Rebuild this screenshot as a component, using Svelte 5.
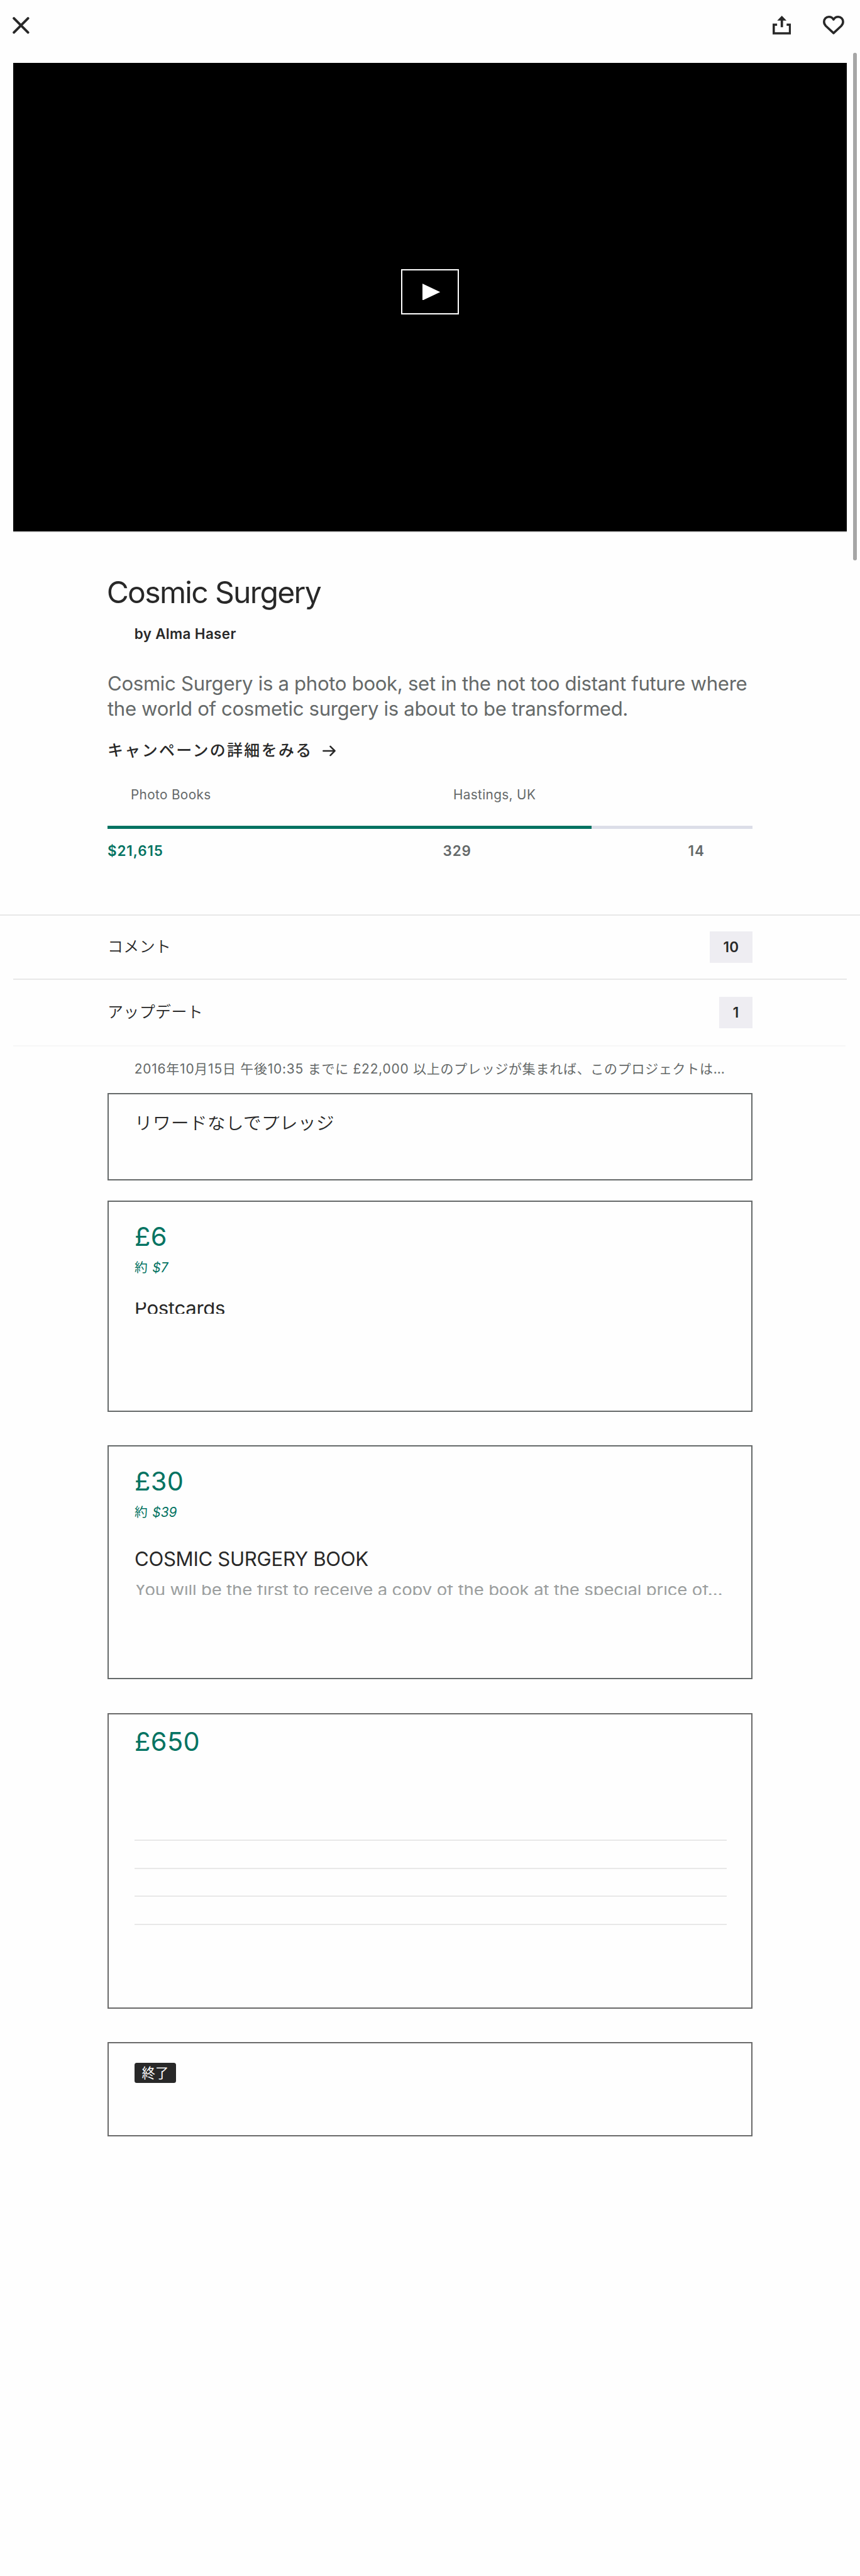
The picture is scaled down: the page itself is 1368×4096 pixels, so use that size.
<script>
  const project = {
    title: 'Cosmic Surgery',
    author: 'by Alma Haser',
    category: 'Photo Books',
    location: 'Hastings, UK',
    pledged: '$21,615',
    backers: '329',
    days: '14',
    funded: 75,
  };

  const links = [
    { label: 'コメント', count: '10' },
    { label: 'アップデート', count: '1' },
  ];

  const placeholderLines = [1, 2, 3, 4];
</script>

<div class="page">
  <header class="topbar">
    <button class="icon-button" aria-label="Close">
      <svg class="close" viewBox="0 0 30 30">
        <path d="M2.4 2.4 27.6 27.6M27.6 2.4 2.4 27.6" fill="none" stroke="#282828" stroke-width="4.4" stroke-linecap="round" />
      </svg>
    </button>
    <div class="actions">
      <button class="icon-button" aria-label="Share">
        <svg class="share" viewBox="0 0 33 34">
          <path d="M8 16H2V31.5H31V16H25" fill="none" stroke="#282828" stroke-width="4" />
          <path d="M16.5 0 24.8 8.8H18.6V20.6H14.4V8.8H8.2Z" fill="#282828" />
        </svg>
      </button>
      <button class="icon-button" aria-label="Save">
        <svg class="heart" viewBox="0 0 38 34">
          <path d="M19 31L5.2 18.2C3 16 2 13.6 2 10.8C2 5.8 5.8 2 10.6 2C14 2 17.2 3.6 19 6.8C20.8 3.6 24 2 27.4 2C32.2 2 36 5.8 36 10.8C36 13.6 35 16 32.8 18.2Z" fill="none" stroke="#282828" stroke-width="4" stroke-linejoin="round" />
        </svg>
      </button>
    </div>
  </header>

  <div class="video">
    <button class="play" aria-label="Play">
      <svg viewBox="0 0 32 30"><path d="M0 0 32 15 0 30Z" fill="#fff" /></svg>
    </button>
  </div>

  <section class="info">
    <h1>{project.title}</h1>
    <div class="author">{project.author}</div>
    <div class="blurb">
      <div class="line">Cosmic Surgery is a photo book, set in the not too distant future where</div>
      <div class="line second">the world of cosmetic surgery is about to be transformed.</div>
    </div>
    <div class="campaign">
      <span>キャンペーンの詳細をみる</span>
      <svg viewBox="0 0 24 20">
        <path d="M1.5 10H21.5M14 2 22 10 14 18" fill="none" stroke="#282828" stroke-width="2.8" stroke-linecap="round" stroke-linejoin="round" />
      </svg>
    </div>
    <div class="meta">
      <span>{project.category}</span>
      <span>{project.location}</span>
    </div>
    <div class="track"><div class="fill" style="width: {project.funded}%"></div></div>
    <div class="stats">
      <span class="pledged">{project.pledged}</span>
      <span class="backers">{project.backers}</span>
      <span class="days">{project.days}</span>
    </div>
  </section>

  <nav class="links">
    {#each links as link}
      <div class="link">
        <span>{link.label}</span>
        <span class="count">{link.count}</span>
      </div>
    {/each}
  </nav>

  <section class="rewards">
    <p class="deadline">2016年10月15日 午後10:35 までに £22,000 以上のプレッジが集まれば、このプロジェクトは…</p>

    <article class="card plain">
      <div class="no-reward">リワードなしでプレッジ</div>
    </article>

    <article class="card small">
      <div class="price">£6</div>
      <div class="approx">約 <em>$7</em></div>
      <div class="name clipped">Postcards</div>
    </article>

    <article class="card medium">
      <div class="price">£30</div>
      <div class="approx">約 <em>$39</em></div>
      <div class="name">COSMIC SURGERY BOOK</div>
      <div class="description">You will be the first to receive a copy of the book at the special price of…</div>
    </article>

    <article class="card large">
      <div class="price">£650</div>
      <div class="rules">
        {#each placeholderLines as n (n)}
          <hr />
        {/each}
      </div>
    </article>

    <article class="card ended">
      <span class="badge">終了</span>
    </article>
  </section>

  <div class="scrollbar"></div>
</div>

<style>
  :global(html) {
    font-size: 8.90625px;
  }
  :global(body) {
    margin: 0;
    background: #fefefe;
  }

  .page {
    position: relative;
    box-sizing: border-box;
    width: 153.6rem;
    height: 459.9rem;
    overflow: hidden;
    background: #fefefe;
    color: #282828;
    font-family: Inter, "Noto Sans CJK JP", sans-serif;
  }

  button {
    display: block;
    margin: 0;
    padding: 0;
    border: 0;
    background: none;
  }
  svg {
    display: block;
  }

  .topbar {
    display: flex;
    justify-content: space-between;
    align-items: center;
    box-sizing: border-box;
    height: 11.2rem;
    padding: 0 2.8rem 2.1rem 2.3rem;
  }
  .actions {
    display: flex;
    gap: 5.7rem;
  }
  .close {
    width: 3rem;
    height: 3rem;
  }
  .share {
    width: 3.3rem;
    height: 3.4rem;
  }
  .heart {
    width: 3.8rem;
    height: 3.4rem;
  }

  .video {
    display: flex;
    justify-content: center;
    align-items: flex-start;
    box-sizing: border-box;
    height: 83.9rem;
    margin: 0 2.4rem;
    padding-top: 36.9rem;
    border-bottom: 2px solid #e8e8e8;
    background: #000;
    background-clip: padding-box;
  }
  .play {
    display: flex;
    justify-content: center;
    align-items: center;
    box-sizing: border-box;
    width: 10.4rem;
    height: 8rem;
    padding-left: 0.4rem;
    border: 2px solid #fff;
  }
  .play svg {
    width: 3.2rem;
    height: 3rem;
  }

  .info {
    box-sizing: border-box;
    height: 68.1rem;
    padding: 7.4rem 19.2rem 0;
  }
  h1 {
    margin: 0 0 0 -0.15rem;
    font-size: 5.4rem;
    font-weight: 400;
    line-height: 6.4rem;
    letter-spacing: -0.19rem;
  }
  .author {
    margin-top: 2.7rem;
    padding-left: 4.8rem;
    font-size: 2.52rem;
    font-weight: 600;
    line-height: 3.2rem;
    letter-spacing: 0.038rem;
  }
  .blurb {
    margin-top: 4.95rem;
    color: #656969;
    font-size: 3.5rem;
    line-height: 4.57rem;
    letter-spacing: -0.037rem;
    white-space: nowrap;
  }
  .second {
    letter-spacing: -0.04rem;
  }
  .campaign {
    display: flex;
    align-items: center;
    gap: 1.7rem;
    margin-top: 3.15rem;
    font-size: 2.8rem;
    font-weight: 500;
    line-height: 4rem;
    letter-spacing: 0.27rem;
  }
  .campaign svg {
    width: 2.4rem;
    height: 2rem;
  }
  .meta {
    display: grid;
    grid-template-columns: 57.6rem 1fr;
    margin-top: 4.4rem;
    padding-left: 4.15rem;
    color: #656969;
    font-size: 2.33rem;
    line-height: 3rem;
    letter-spacing: 0.04rem;
  }
  .track {
    height: 0.6rem;
    margin-top: 3.95rem;
    background: #dcdee8;
  }
  .fill {
    height: 100%;
    background: #037362;
  }
  .stats {
    display: grid;
    grid-template-columns: 59.9rem 43.8rem 1fr;
    margin-top: 2.38rem;
    color: #656969;
    font-size: 2.52rem;
    font-weight: 600;
    line-height: 3.2rem;
    letter-spacing: 0.1rem;
  }
  .pledged {
    color: #037362;
  }

  .links {
    display: flex;
    flex-direction: column;
    border-top: 2px solid #e8e8e8;
  }
  .link {
    display: flex;
    justify-content: space-between;
    align-items: center;
    box-sizing: border-box;
    height: 11.5rem;
    margin: 0 2.4rem;
    padding: 0 16.8rem;
    border-bottom: 2px solid #e8e8e8;
    font-size: 2.8rem;
    font-weight: 350;
    line-height: 4rem;
    letter-spacing: 0.05rem;
  }
  .link:last-child {
    height: 11.9rem;
    margin-right: 2.6rem;
    padding-right: 16.6rem;
    border-color: #f6f6f6;
  }
  .count {
    padding: 0 2.4rem;
    background: #eeedf2;
    font-size: 2.52rem;
    font-weight: 600;
    line-height: 5.6rem;
  }

  .rewards {
    padding: 2.45rem 19.2rem 0;
  }
  .deadline {
    margin: 0 4.8rem 2.65rem;
    color: #656969;
    font-size: 2.35rem;
    line-height: 3.2rem;
    letter-spacing: 0.09rem;
    white-space: nowrap;
  }
  .card {
    box-sizing: border-box;
    padding: 0 4.6rem;
    border: 2px solid #656969;
    margin-bottom: 6rem;
  }
  .plain {
    height: 15.6rem;
    padding-top: 3.9rem;
    margin-bottom: 3.6rem;
  }
  .small {
    height: 37.7rem;
  }
  .medium {
    height: 41.8rem;
  }
  .large {
    height: 52.8rem;
    border-color: #696969;
  }
  .ended {
    height: 16.8rem;
    padding-top: 3.4rem;
    border-color: #696969;
  }

  .no-reward {
    height: 2.8rem;
    overflow: hidden;
    font-size: 3.2rem;
    font-weight: 350;
    line-height: 2.4rem;
    letter-spacing: 0.056rem;
    white-space: nowrap;
  }
  .price {
    padding-top: 3.5rem;
    color: #037362;
    font-size: 4.66rem;
    line-height: 5.6rem;
    letter-spacing: 0.05rem;
  }
  .large .price {
    padding-top: 2.2rem;
  }
  .approx {
    margin-top: 1.2rem;
    color: #037362;
    font-size: 2.33rem;
    line-height: 3rem;
    letter-spacing: 0.1rem;
  }
  .approx em {
    letter-spacing: 0;
  }
  .name {
    margin-top: 4.6rem;
    font-size: 3.5rem;
    line-height: 4.6rem;
    letter-spacing: -0.036rem;
  }
  .clipped {
    height: 2.05rem;
    margin-top: 4.7rem;
    overflow: hidden;
    line-height: 2.15rem;
  }
  .description {
    height: 1.8rem;
    margin-top: 2.25rem;
    overflow: hidden;
    color: #9b9e9e;
    font-size: 3.1rem;
    line-height: 1.65rem;
    letter-spacing: -0.02rem;
    white-space: nowrap;
  }
  .rules {
    display: flex;
    flex-direction: column;
    gap: calc(5rem - 2px);
    margin-top: 14.6rem;
    margin-right: -0.2rem;
  }
  hr {
    width: 100%;
    height: 2px;
    margin: 0;
    border: 0;
    background: #e8e8e8;
  }
  .badge {
    display: block;
    width: 7.4rem;
    border-radius: 0.4rem;
    background: #282828;
    color: #fefefe;
    font-size: 2.4rem;
    line-height: 3.6rem;
    text-align: center;
  }

  .scrollbar {
    position: absolute;
    top: 9.4rem;
    right: 0.6rem;
    width: 0.6rem;
    height: 90.6rem;
    border-radius: 0.3rem;
    background: #a6a6a6;
  }
</style>
